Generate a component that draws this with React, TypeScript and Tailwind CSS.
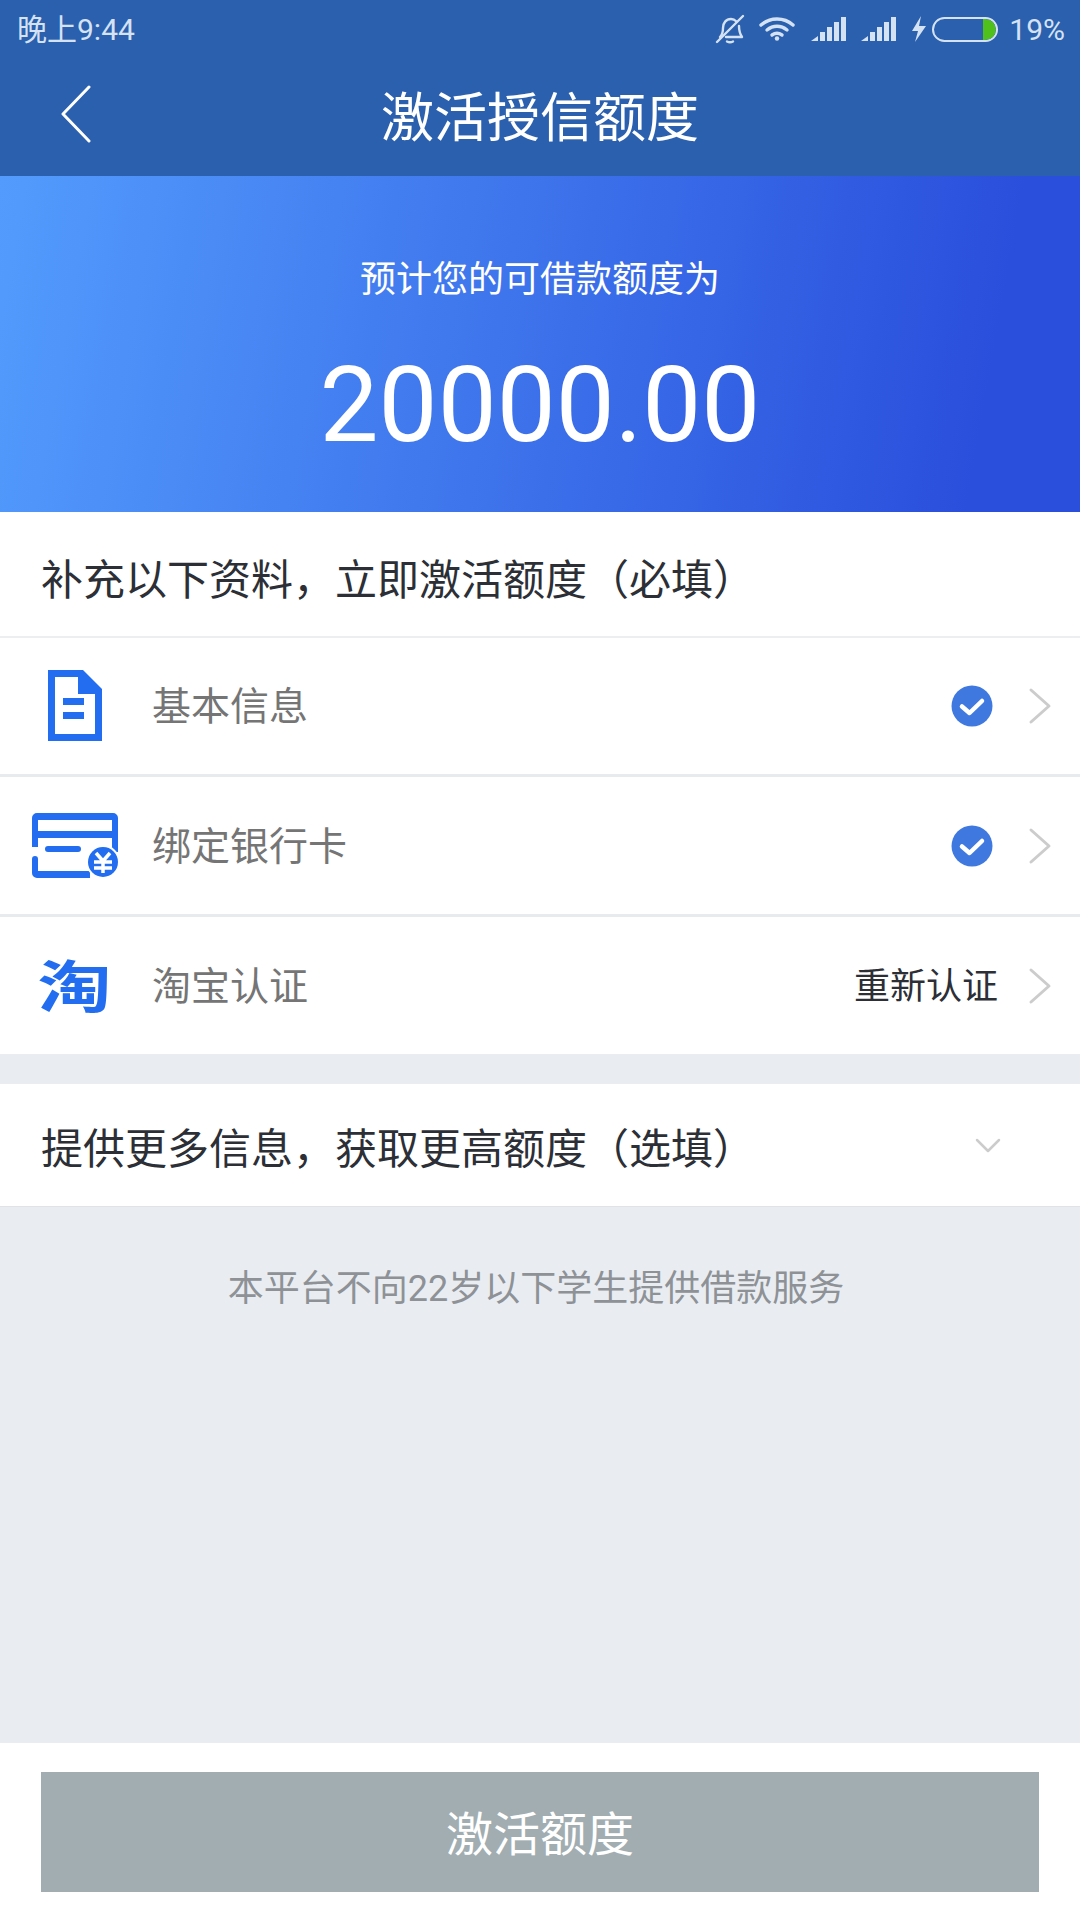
const CJK = "font-['Roboto','Noto_Sans_CJK_SC',sans-serif]";

function BellOff() {
  return (
    <svg width="32" height="32" viewBox="0 0 32 32" fill="none" stroke="#d5e2f3" strokeWidth="2.400" strokeLinecap="round" strokeLinejoin="round">
      <path d="M6 24c2-2 3-5 3-9 0-5 3-9 8-9 2 0 4 1 5.500 2.500" />
      <path d="M25 13c0 5 1 8 3 11H12" />
      <path d="M13 28.500c2 1 4 1 6 0" />
      <path d="M3 29 29 3" />
    </svg>
  );
}

function Wifi() {
  return (
    <svg width="36" height="24" viewBox="0 0 36 24" fill="none" stroke="#d5e2f3" strokeWidth="3.400" strokeLinecap="round">
      <path d="M2 8c9-8 23-8 32 0" />
      <path d="M8 13c6-5 14-5 20 0" />
      <path d="M13 18c3-2 7-2 10 0" />
      <circle cx="18" cy="21.500" r="2.200" fill="#d5e2f3" stroke="none" />
    </svg>
  );
}

function Signal() {
  return (
    <svg width="36" height="24" viewBox="0 0 36 24" fill="#d5e2f3">
      <path d="M0 24 7 19v5z" />
      <rect x="9" y="15" width="5" height="9" />
      <rect x="16" y="10" width="5" height="14" />
      <rect x="23" y="5" width="5" height="19" />
      <rect x="30" y="0" width="5" height="24" />
    </svg>
  );
}

function StatusBar() {
  return (
    <div className={`flex h-[58px] items-center justify-between pl-[17px] pr-[15px] text-[30px] text-[#d5e2f3] ${CJK}`}>
      <span>晚上9:44</span>
      <div className="flex items-center">
        <BellOff />
        <div className="ml-[13px]"><Wifi /></div>
        <div className="ml-[16px]"><Signal /></div>
        <div className="ml-[14px]"><Signal /></div>
        <svg className="ml-[14px]" width="16" height="26" viewBox="0 0 16 26" fill="#d5e2f3">
          <path d="M10 0 1 15h6l-3 11 11-16H8z" />
        </svg>
        <div className="ml-[5px] flex h-[25px] w-[66px] justify-end overflow-hidden rounded-full border-2 border-[#d5e2f3]">
          <div className="h-full w-[13px] rounded-r-full bg-[#4fc01c]" />
        </div>
        <span className="ml-[11px]">19%</span>
      </div>
    </div>
  );
}

function Chevron() {
  return (
    <svg width="24" height="38" viewBox="0 0 24 38" fill="none" stroke="#cccccc" strokeWidth="3" strokeLinecap="round" strokeLinejoin="round">
      <path d="M3 3l18 16L3 35" />
    </svg>
  );
}

function Check() {
  return (
    <svg className="mr-[3px]" width="42" height="42" viewBox="0 0 42 42">
      <circle cx="21" cy="21" r="20.500" fill="#3f79e0" />
      <path d="M11 21.500l7.500 6.500L31 16" fill="none" stroke="#ffffff" strokeWidth="4.500" strokeLinecap="round" strokeLinejoin="round" />
    </svg>
  );
}

function DocIcon() {
  return (
    <svg width="54" height="71" viewBox="0 0 54 71">
      <path fillRule="evenodd" fill="#226df0" d="M0 0h35l19 19v52H0zM7 7v57h40V24H30V7z" />
      <path fill="#226df0" d="M15 28h21v7H15zM15 42h21v7H15z" />
    </svg>
  );
}

function CardIcon() {
  return (
    <svg width="86" height="65" viewBox="0 0 86 65">
      <path fillRule="evenodd" fill="#226df0" d="M5 0h76a5 5 0 0 1 5 5v34h-6V25H6v9H0V5a5 5 0 0 1 5-5zM6 7v11h74V7z" />
      <rect x="13" y="33" width="36" height="6" rx="3" fill="#226df0" />
      <path fill="#226df0" d="M0 46a3 3 0 0 1 6 0v12h52v7H5a5 5 0 0 1-5-5z" />
      <circle cx="71" cy="49" r="17" fill="#ffffff" />
      <circle cx="71" cy="49" r="15" fill="#226df0" />
      <path d="M64 40l7 8 7-8M62 49h18M62 55h18M71 48v12" fill="none" stroke="#ffffff" strokeWidth="3.500" />
    </svg>
  );
}

function Row({ icon, label, right }: { icon: React.ReactNode; label: string; right: React.ReactNode }) {
  return (
    <div className="flex h-[137px] items-center bg-white pr-[28px]">
      <div className="flex w-[152px] shrink-0 justify-center pr-[3px]">{icon}</div>
      <span className="flex-1 pt-[4px] text-[39px] text-[#757575]">{label}</span>
      {right}
      <div className="ml-[32px]"><Chevron /></div>
    </div>
  );
}

export default function App() {
  return (
    <div className={`flex h-[1920px] w-[1080px] flex-col bg-[#e9edf2] ${CJK}`}>
      {/* HEADER */}
      <header className="h-[176px] bg-[#2a60ae]">
        <StatusBar />
        <div className="relative flex h-[118px] items-center justify-center pt-[6px]">
          <svg className="absolute left-[60px] top-[27px]" width="32" height="58" viewBox="0 0 32 58" fill="none" stroke="#ffffff" strokeWidth="3" strokeLinecap="round" strokeLinejoin="round">
            <path d="M29 2 3 29l26 27" />
          </svg>
          <h1 className="text-[53px] text-white">激活授信额度</h1>
        </div>
      </header>

      {/* AMOUNT */}
      <section className="flex h-[336px] flex-col items-center bg-linear-[100deg] from-[#539cfd] to-[#2a4fdc] to-90% text-white">
        <p className="mt-[78px] text-[36px] leading-[52px]">预计您的可借款额度为</p>
        <p className="mt-[39px] text-[105px] leading-[122px]">20000.00</p>
      </section>

      {/* REQUIRED */}
      <div className="-mb-px flex h-[126px] items-center border-b-2 border-[#eceef0] bg-white pl-[41px] pt-[12px] text-[42px] text-[#2c2f36] relative z-10">
        补充以下资料，立即激活额度（必填）
      </div>
      <Row icon={<DocIcon />} label="基本信息" right={<Check />} />
      <div className="h-[3px] bg-[#e8ebee]" />
      <Row icon={<CardIcon />} label="绑定银行卡" right={<Check />} />
      <div className="h-[3px] bg-[#e8ebee]" />
      <Row
        icon={<span className="mt-[4px] scale-y-[0.76] text-[74px] leading-none font-bold text-[#226df0]">淘</span>}
        label="淘宝认证"
        right={<span className="-mr-[2px] pt-[2px] text-[36px] text-[#2c2f36]">重新认证</span>}
      />

      {/* OPTIONAL */}
      <div className="mt-[30px] flex h-[123px] items-center justify-between border-b border-[#dfe3e8] bg-white pl-[41px] pr-[79px] text-[42px] text-[#2c2f36]">
        <span className="pt-[8px]">提供更多信息，获取更高额度（选填）</span>
        <svg className="mt-[2px]" width="26" height="16" viewBox="0 0 26 16" fill="none" stroke="#cccccc" strokeWidth="2.500" strokeLinecap="round" strokeLinejoin="round">
          <path d="M2 2l11 11L24 2" />
        </svg>
      </div>

      <p className="mt-[58px] pr-[8px] text-center text-[36px] leading-[48px] text-[#8e9296]">本平台不向22岁以下学生提供借款服务</p>

      {/* FOOTER */}
      <div className="mt-auto flex h-[177px] justify-center bg-white pt-[29px]">
        <button className="h-[120px] w-[998px] bg-[#a1adb1] pt-[6px] text-[47px] text-white">激活额度</button>
      </div>
    </div>
  );
}
